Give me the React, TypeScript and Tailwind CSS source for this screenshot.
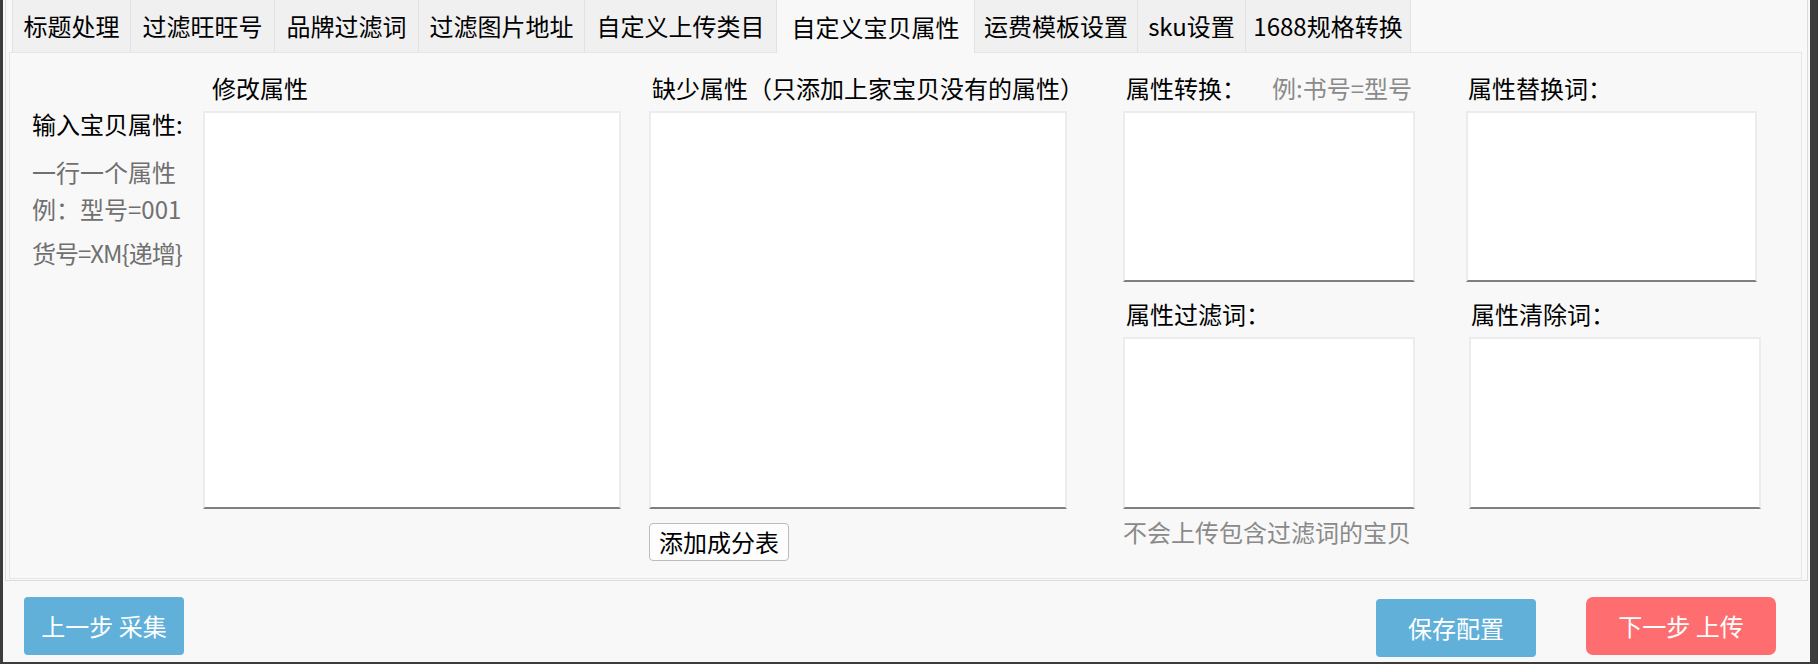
const tabs = [
  { label: "标题处理", w: "w-[119px]" },
  { label: "过滤旺旺号", w: "w-[144px]" },
  { label: "品牌过滤词", w: "w-[144px]" },
  { label: "过滤图片地址", w: "w-[166px]" },
  { label: "自定义上传类目", w: "w-[192px]" },
  { label: "自定义宝贝属性", w: "w-[198px]", active: true },
  { label: "运费模板设置", w: "w-[163px]" },
  { label: "sku设置", w: "w-[108px]" },
  { label: "1688规格转换", w: "w-[165px]" },
];

function Box({ className }: { className: string }) {
  return (
    <textarea
      className={`block resize-none bg-white border-2 border-[#ececec] border-b-[#7f7f7f] outline-none ${className}`}
    />
  );
}

function Label({ children, className = "" }: { children: React.ReactNode; className?: string }) {
  return <div className={`h-[24px] leading-[24px] whitespace-nowrap text-black ${className}`}>{children}</div>;
}

export default function App() {
  return (
    <div className="w-[1818px] h-[664px] bg-[#3c3c3c] pl-[3px] pr-[8px] pb-[2px] flex font-['Noto_Sans_CJK_SC',sans-serif] text-[24px]">
      <div className="flex-1 bg-[#f8f8f8] flex flex-col">
        <div className="mx-[2px] border-x border-b border-[#dcdcdc] pl-[3px] pr-[5px] pb-px">
          {/* tabs */}
          <div className="flex items-end pl-[3px] h-[52px]">
            {tabs.map((t, i) => (
              <div
                key={t.label}
                className={`${t.w} flex items-center justify-center border-r border-[#e2e2e2] text-black whitespace-nowrap ${
                  i === 0 ? "border-l" : ""
                } ${t.active ? "bg-[#f8f8f8] h-[53px] -mb-px relative z-10" : "bg-[#f0f0f0] h-[52px]"}`}
              >
                {t.label}
              </div>
            ))}
          </div>

          {/* panel */}
          <div className="h-[527px] border border-[#e6e6e6] bg-[#f8f8f8] flex pt-[23px] pl-[22px]">
            <div className="w-[171px] pt-[36px] flex flex-col">
              <Label>输入宝贝属性:</Label>
              <div className="mt-[24px] leading-[24px] text-[#707070]">一行一个属性</div>
              <div className="mt-[13px] leading-[24px] text-[#707070]">例：型号=001</div>
              <div className="mt-[20px] leading-[24px] text-[#707070] tracking-[-1px]">货号=XM{"{"}递增{"}"}</div>
            </div>

            <div className="w-[418px] flex flex-col">
              <Label className="pl-[9px]">修改属性</Label>
              <Box className="mt-[11px] w-[418px] h-[398px]" />
            </div>

            <div className="ml-[28px] w-[418px] flex flex-col items-start">
              <Label className="pl-[3px]">缺少属性（只添加上家宝贝没有的属性）</Label>
              <Box className="mt-[11px] w-[418px] h-[398px]" />
              <button className="mt-[14px] h-[38px] px-[9px] rounded-[4px] border border-[#bcbcbc] bg-[#fdfdfd] text-black leading-[24px]">
                添加成分表
              </button>
            </div>

            <div className="ml-[56px] w-[292px] flex flex-col">
              <Label className="pl-[3px] flex">
                属性转换：<span className="ml-[26px] text-[#8a8a8a]">例:书号=型号</span>
              </Label>
              <Box className="mt-[11px] w-[292px] h-[171px]" />
              <Label className="mt-[20px] pl-[3px]">属性过滤词：</Label>
              <Box className="mt-[11px] w-[292px] h-[172px]" />
              <div className="mt-[11px] leading-[24px] text-[#8a8a8a] whitespace-nowrap">不会上传包含过滤词的宝贝</div>
            </div>

            <div className="ml-[51px] w-[295px] flex flex-col">
              <Label className="pl-[2px]">属性替换词：</Label>
              <Box className="mt-[11px] w-[291px] h-[171px]" />
              <Label className="mt-[20px] pl-[5px]">属性清除词：</Label>
              <Box className="mt-[11px] ml-[3px] w-[292px] h-[172px]" />
            </div>
          </div>
        </div>

        {/* footer buttons */}
        <div className="flex-1 flex items-start pt-[16px] pl-[21px] pr-[34px]">
          <button className="w-[160px] h-[58px] rounded-[4px] bg-[#60b0da] text-white">上一步 采集</button>
          <div className="flex-1" />
          <button className="mt-[2px] w-[160px] h-[58px] rounded-[4px] bg-[#60b0da] text-white">保存配置</button>
          <button className="ml-[50px] w-[190px] h-[58px] rounded-[7px] bg-[#fe6e71] text-white">下一步 上传</button>
        </div>
      </div>
    </div>
  );
}
